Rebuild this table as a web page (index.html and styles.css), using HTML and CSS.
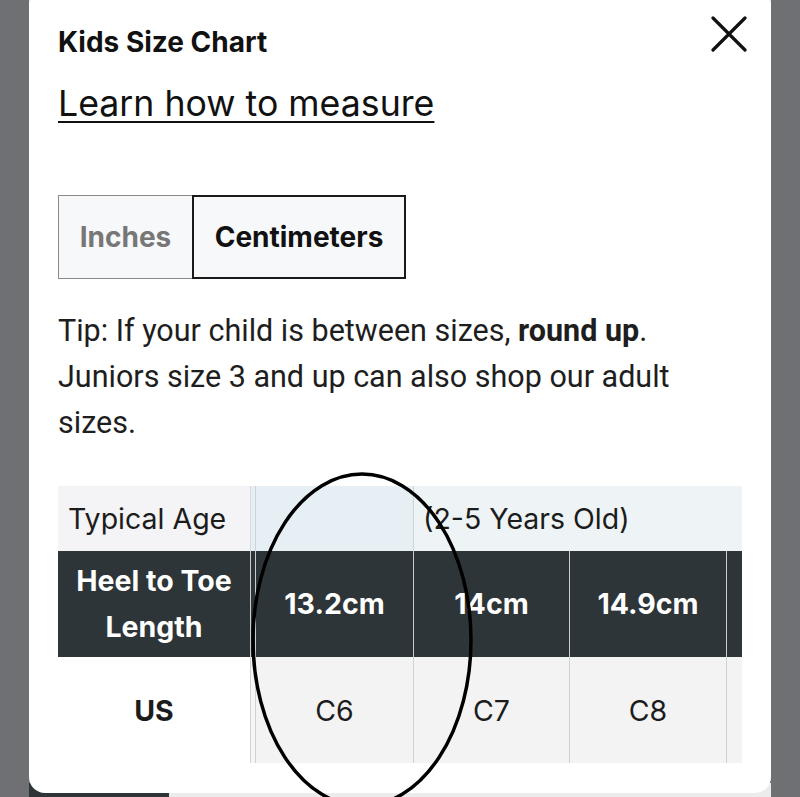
FILE: index.html
```html
<!DOCTYPE html>
<html>
<head>
<meta charset="utf-8">
<link rel="stylesheet" href="styles.css">
</head>
<body>
<div class="modal">
  <button class="close" aria-label="Close">
    <svg width="36" height="36" viewBox="0 0 36 36"><path d="M2 2 L34 34 M34 2 L2 34" stroke="#111" stroke-width="3.2" stroke-linecap="round"/></svg>
  </button>
  <h2 class="title">Kids Size Chart</h2>
  <a class="learn" href="#">Learn how to measure</a>
  <div class="tabs">
    <div class="tab tab-off">Inches</div>
    <div class="tab tab-on">Centimeters</div>
  </div>
  <p class="tip">Tip: If your child is between sizes, <b>round up</b>. Juniors size 3 and up can also shop our adult sizes.</p>
  <div class="chart">
    <div class="row r-age">
      <div class="c c0">Typical Age</div>
      <div class="c sp"></div>
      <div class="c c1"></div>
      <div class="c span">(2-5 Years Old)</div>
    </div>
    <div class="row r-len">
      <div class="c c0">Heel to Toe<br>Length</div>
      <div class="c sp"></div>
      <div class="c c1">13.2cm</div>
      <div class="c c2">14cm</div>
      <div class="c c3">14.9cm</div>
      <div class="c c4"></div>
    </div>
    <div class="row r-us">
      <div class="c c0">US</div>
      <div class="c sp"></div>
      <div class="c c1">C6</div>
      <div class="c c2">C7</div>
      <div class="c c3">C8</div>
      <div class="c c4"></div>
    </div>
  </div>
</div>
<div class="below">
  <div class="b-dark"></div>
  <div class="b-light"></div>
</div>
<svg class="mark" width="800" height="797" viewBox="0 0 800 797">
  <ellipse cx="362" cy="640" rx="109" ry="166" fill="none" stroke="#000" stroke-width="3.5"/>
</svg>
</body>
</html>
```

FILE: styles.css
```css
html, body {
  margin: 0;
  padding: 0;
}
body {
  width: 800px;
  height: 797px;
  overflow: hidden;
  background: #6e7073;
  font-family: "Inter", "Lato", "Liberation Sans", sans-serif;
  color: #1c1c1c;
  position: relative;
}
.modal {
  position: relative;
  z-index: 1;
  box-sizing: border-box;
  margin: -13px 0 0 29px;
  width: 742px;
  height: 806px;
  background: #fff;
  border-radius: 16px;
  padding: 39px 29px 0 29px;
  display: flex;
  flex-direction: column;
  align-items: flex-start;
}
.close {
  position: absolute;
  top: 29px;
  right: 24px;
  border: 0;
  background: none;
  padding: 0;
  width: 36px;
  height: 36px;
}
.close svg { display: block; }
.title {
  margin: 0;
  font-size: 28px;
  font-weight: 700;
  line-height: 32px;
  color: #111;
}
.learn {
  margin-top: 24px;
  font-size: 35.7px;
  line-height: 42px;
  color: #111;
  text-decoration: underline;
  text-decoration-thickness: 2px;
  text-underline-offset: 5px;
}
.tabs {
  margin-top: 71px;
  display: flex;
}
.tab {
  box-sizing: border-box;
  height: 84px;
  display: flex;
  align-items: center;
  justify-content: center;
  font-size: 28px;
  font-weight: 700;
  background: #f7f8fa;
}
.tab-off {
  width: 134px;
  border: 1.5px solid #8a8a8a;
  border-right: 0;
  color: #777;
}
.tab-on {
  width: 214px;
  border: 2px solid #1a1a1a;
  color: #111;
}
.tip {
  margin: 29px 0 0 0;
  font-family: "Roboto", "Liberation Sans", sans-serif;
  font-size: 30.5px;
  line-height: 46px;
  color: #1e1e1e;
  width: 680px;
}
.tip b { font-weight: 700; }
.chart {
  margin-top: 40px;
  display: flex;
  flex-direction: column;
  font-size: 28.5px;
}
.row {
  display: flex;
}
.c {
  box-sizing: border-box;
  display: flex;
  align-items: center;
  justify-content: center;
  text-align: center;
  border-right: 1px solid #cfd2d3;
}
.c0 { width: 193px; }
.sp { width: 5px; }
.c1 { width: 158px; }
.c2 { width: 156px; }
.c3 { width: 157px; }
.c4 { width: 15px; border-right: 0; }
.span {
  width: 328px;
  border-right: 0;
  justify-content: flex-start;
  padding-left: 9px;
}
.r-age { height: 65px; }
.r-age .c0 {
  background: #f4f4f6;
  justify-content: flex-start;
  padding-left: 10px;
  border-right-color: #d6d9da;
}
.r-age .sp, .r-age .c1 { background: #e6f0f4; border-right-color: #cdd4d6; }
.r-age .span { background: #eef4f5; }
.r-len {
  height: 106px;
  background: #2e3538;
  color: #fff;
  font-weight: 700;
  line-height: 46px;
}
.r-len .c { border-right-color: #c9cccd; }
.r-len .c4 { border-right: 0; }
.r-us { height: 106px; }
.r-us .c0 { background: #fff; font-weight: 700; }
.r-us .sp { background: #f6f6f6; }
.r-us .c1, .r-us .c2, .r-us .c3, .r-us .c4 { background: #f3f3f3; }
.below {
  display: flex;
  height: 14px;
  margin: -10px 0 0 29px;
  width: 742px;
  position: relative;
  z-index: 0;
}
.b-dark { width: 140px; background: #2e3538; }
.b-light { flex: 1; background: #ececec; }
.mark {
  position: absolute;
  z-index: 2;
  left: 0;
  top: 0;
  pointer-events: none;
}
```
